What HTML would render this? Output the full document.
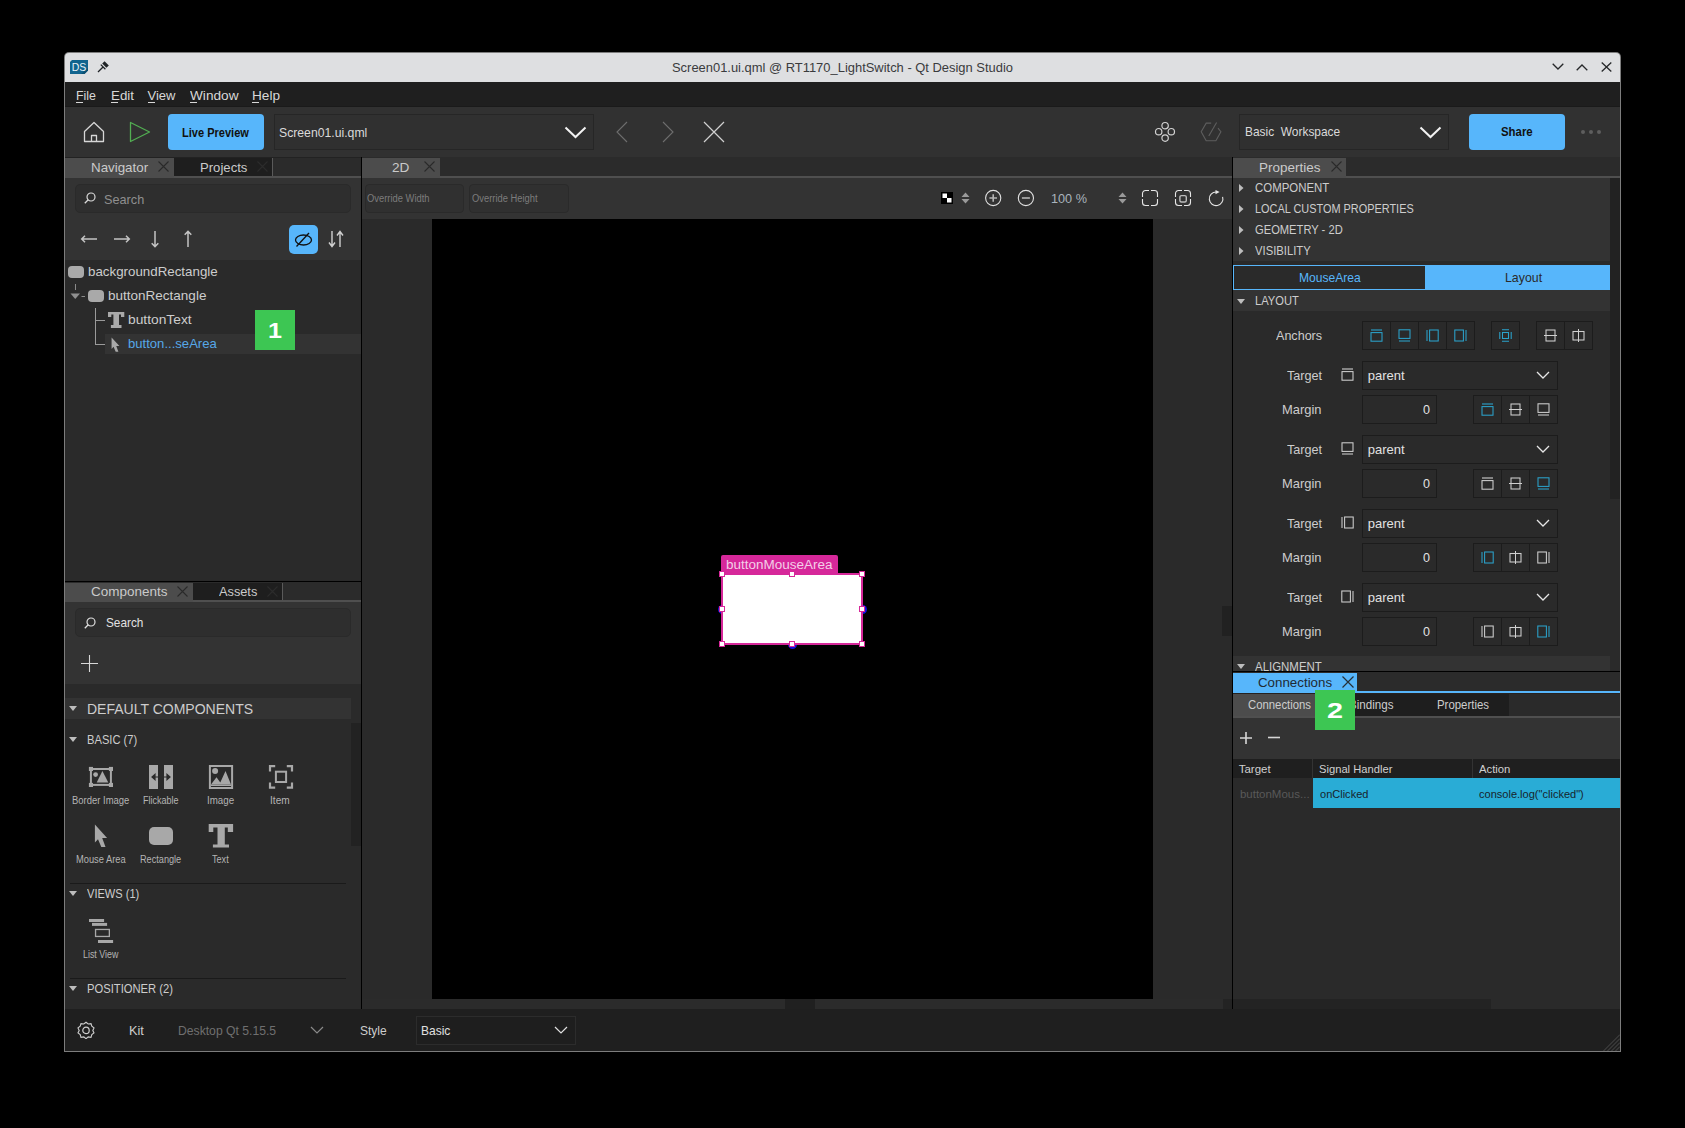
<!DOCTYPE html><html><head><meta charset="utf-8"><style>
html,body{margin:0;padding:0;background:#000;width:1685px;height:1128px;overflow:hidden;position:relative}
body>div,body>svg{position:absolute}
.t{white-space:pre;font-family:"Liberation Sans",sans-serif;transform-origin:0 50%}
</style></head><body>
<div style="left:64px;top:52px;width:1557px;height:1000px;background:#7d7d7d;border-radius:5px 5px 0 0;"></div>
<div style="left:65px;top:53px;width:1555px;height:29px;background:#dedfe1;border-radius:4px 4px 0 0;"></div>
<div style="left:65px;top:82px;width:1555px;height:25px;background:#1f1f1f;"></div>
<div style="left:65px;top:107px;width:1555px;height:50px;background:#313131;"></div>
<div style="left:65px;top:106px;width:1555px;height:1px;background:#1a1a1a;"></div>
<svg style="left:70px;top:60px;" width="19" height="14" viewBox="0 0 19 14"><path d="M2 0H18V10.5L14.5 14H0V2Z" fill="#11648e"/><path d="M18 0V10.5L14.5 14H11L18 8Z" fill="#0c5072"/><text x="9" y="11" font-family="Liberation Sans" font-size="10.5" fill="#e8f2f7" text-anchor="middle">DS</text></svg>
<svg style="left:97px;top:60px;" width="13" height="13" viewBox="0 0 13 13"><path d="M7.6 1.2L11.8 5.4L9.4 7.8L5.2 3.6Z" fill="#1f2326"/><path d="M3.8 4.6L8.4 9.2M5.8 7.2L1 12" stroke="#1f2326" stroke-width="1.3"/></svg>
<div class="t" style="left:671.5px;top:59.05px;font-size:13px;line-height:17px;color:#3a3b3d;font-weight:400;transform:scaleX(0.9943);">Screen01.ui.qml @ RT1170_LightSwitch - Qt Design Studio</div>
<svg style="left:1552px;top:63px;" width="12" height="8" viewBox="0 0 12 8"><path d="M0.7 0.7L6 6L11.3 0.7" stroke="#26282a" stroke-width="1.3" fill="none"/></svg>
<svg style="left:1576px;top:63px;" width="12" height="8" viewBox="0 0 12 8"><path d="M0.7 7.3L6 2L11.3 7.3" stroke="#26282a" stroke-width="1.3" fill="none"/></svg>
<svg style="left:1601px;top:62px;" width="11" height="10" viewBox="0 0 11 10"><path d="M0.7 0.5L10.3 9.5M10.3 0.5L0.7 9.5" stroke="#26282a" stroke-width="1.3" fill="none"/></svg>
<div class="t" style="left:75.5px;top:86.85px;font-size:13px;line-height:17px;color:#d8d8d8;font-weight:400;transform:scaleX(0.9545);">File</div>
<div style="left:76px;top:102px;width:7px;height:1px;background:#d8d8d8;"></div>
<div class="t" style="left:110.5px;top:86.85px;font-size:13px;line-height:17px;color:#d8d8d8;font-weight:400;transform:scaleX(1.0265);">Edit</div>
<div style="left:111px;top:102px;width:7px;height:1px;background:#d8d8d8;"></div>
<div class="t" style="left:147.5px;top:86.85px;font-size:13px;line-height:17px;color:#d8d8d8;font-weight:400;">View</div>
<div style="left:148px;top:102px;width:7px;height:1px;background:#d8d8d8;"></div>
<div class="t" style="left:189.5px;top:86.85px;font-size:13px;line-height:17px;color:#d8d8d8;font-weight:400;transform:scaleX(1.0486);">Window</div>
<div style="left:190px;top:102px;width:7px;height:1px;background:#d8d8d8;"></div>
<div class="t" style="left:251.5px;top:86.85px;font-size:13px;line-height:17px;color:#d8d8d8;font-weight:400;transform:scaleX(1.0467);">Help</div>
<div style="left:252px;top:102px;width:7px;height:1px;background:#d8d8d8;"></div>
<svg style="left:83px;top:121px;" width="22" height="22" viewBox="0 0 22 22"><path d="M1.5 10.5L11 1.5L20.5 10.5V20.5H1.5Z M8.5 20.5V14.5H13.5V20.5" stroke="#d6d6d6" stroke-width="1.3" fill="none" stroke-linejoin="round"/></svg>
<svg style="left:129px;top:121px;" width="22" height="22" viewBox="0 0 22 22"><path d="M1.5 1.5L20.5 11L1.5 20.5Z" stroke="#52ad52" stroke-width="1.3" fill="none" stroke-linejoin="round"/></svg>
<div style="left:168px;top:114px;width:96px;height:36px;background:#57b6fb;border-radius:4px;"></div>
<div class="t" style="left:182.3px;top:124.54px;font-size:12.5px;line-height:16px;color:#111;font-weight:700;transform:scaleX(0.8832);">Live Preview</div>
<div style="left:274px;top:114px;width:320px;height:36px;background:#303030;border:1px solid #262626;box-sizing:border-box;"></div>
<div class="t" style="left:279.2px;top:123.65px;font-size:13px;line-height:17px;color:#dadada;font-weight:400;transform:scaleX(0.9398);">Screen01.ui.qml</div>
<svg style="left:564px;top:126px;" width="23" height="13" viewBox="0 0 23 13"><path d="M1.5 1.5L11.5 11L21.5 1.5" stroke="#f2f2f2" stroke-width="2" fill="none"/></svg>
<svg style="left:616px;top:121px;" width="12" height="22" viewBox="0 0 12 22"><path d="M11 1L1 11L11 21" stroke="#6e6e6e" stroke-width="1.1" fill="none"/></svg>
<svg style="left:662px;top:121px;" width="12" height="22" viewBox="0 0 12 22"><path d="M1 1L11 11L1 21" stroke="#6e6e6e" stroke-width="1.1" fill="none"/></svg>
<svg style="left:703px;top:121px;" width="22" height="22" viewBox="0 0 22 22"><path d="M1 1L21 21M21 1L1 21" stroke="#d0d0d0" stroke-width="1.2" fill="none"/></svg>
<svg style="left:1154px;top:121px;" width="22" height="22" viewBox="0 0 22 22"><g stroke="#d2d2d2" stroke-width="1.2" fill="none"><circle cx="11.1" cy="4.7" r="3.2"/><circle cx="4.7" cy="10.7" r="3.2"/><circle cx="17.3" cy="10.7" r="3.2"/><circle cx="11.1" cy="17.1" r="3.2"/></g></svg>
<svg style="left:1200px;top:121px;" width="22" height="22" viewBox="0 0 22 22"><g stroke="#5e5e5e" stroke-width="1.1" fill="none"><path d="M11.2 2.1H6.2L1.2 10.7L6.2 19.7H15.9L20.9 10.7L18 7.1"/><path d="M16.6 1.4L8.8 15"/></g></svg>
<div style="left:1239px;top:114px;width:210px;height:36px;background:#303030;border:1px solid #262626;box-sizing:border-box;"></div>
<div class="t" style="left:1245.0px;top:123.35px;font-size:13px;line-height:17px;color:#dadada;font-weight:400;transform:scaleX(0.9172);">Basic  Workspace</div>
<svg style="left:1419px;top:126px;" width="23" height="13" viewBox="0 0 23 13"><path d="M1.5 1.5L11.5 11L21.5 1.5" stroke="#f2f2f2" stroke-width="2" fill="none"/></svg>
<div style="left:1469px;top:114px;width:96px;height:36px;background:#57b6fb;border-radius:4px;"></div>
<div class="t" style="left:1501.1px;top:124.14px;font-size:12.5px;line-height:16px;color:#111;font-weight:700;transform:scaleX(0.9122);">Share</div>
<div style="left:1581px;top:130px;width:4px;height:4px;background:#5e5e5e;border-radius:50%;"></div>
<div style="left:1589px;top:130px;width:4px;height:4px;background:#5e5e5e;border-radius:50%;"></div>
<div style="left:1597px;top:130px;width:4px;height:4px;background:#5e5e5e;border-radius:50%;"></div>
<div style="left:65px;top:157px;width:296px;height:19px;background:#2b2b2b;"></div>
<div style="left:65px;top:176px;width:296px;height:2px;background:#4f4f4f;"></div>
<div style="left:65px;top:157px;width:1555px;height:1px;background:#222222;"></div>
<div style="left:65px;top:158px;width:109px;height:20px;background:#4c4c4c;"></div>
<div class="t" style="left:90.9px;top:158.95px;font-size:13px;line-height:17px;color:#cacaca;font-weight:400;transform:scaleX(1.0262);">Navigator</div>
<svg style="left:158px;top:161px;" width="11" height="11" viewBox="0 0 11 11"><path d="M0.5 0.5L10.5 10.5M10.5 0.5L0.5 10.5" stroke="#2a2a2a" stroke-width="1.1"/></svg>
<div style="left:174px;top:158px;width:98px;height:18px;background:#1e1e1e;"></div>
<div class="t" style="left:199.9px;top:158.65px;font-size:13px;line-height:17px;color:#cacaca;font-weight:400;transform:scaleX(1.0092);">Projects</div>
<svg style="left:257px;top:161px;" width="11" height="11" viewBox="0 0 11 11"><path d="M0.5 0.5L10.5 10.5M10.5 0.5L0.5 10.5" stroke="#2c2c2c" stroke-width="1.1"/></svg>
<div style="left:272px;top:158px;width:1px;height:18px;background:#5a5a5a;"></div>
<div style="left:65px;top:178px;width:296px;height:82px;background:#333333;"></div>
<div style="left:75px;top:184px;width:276px;height:29px;background:#2e2e2e;border:1px solid #2a2a2a;border-radius:5px;box-sizing:border-box;"></div>
<svg style="left:84px;top:192px;" width="12" height="12" viewBox="0 0 12 12"><circle cx="7" cy="5" r="4" stroke="#d8d8d8" stroke-width="1.2" fill="none"/><path d="M4.2 7.8L0.8 11.2" stroke="#d8d8d8" stroke-width="1.3"/></svg>
<div class="t" style="left:103.5px;top:190.65px;font-size:13px;line-height:17px;color:#8f8f8f;font-weight:400;transform:scaleX(0.9757);">Search</div>
<svg style="left:80px;top:233px;" width="18" height="12" viewBox="0 0 18 12"><path d="M17 6H2.5M5 2.7L1.7 6L5 9.3" stroke="#c4c4c4" stroke-width="1.5" fill="none"/></svg>
<svg style="left:113px;top:233px;" width="18" height="12" viewBox="0 0 18 12"><path d="M1 6H15.5M13 2.7L16.3 6L13 9.3" stroke="#c4c4c4" stroke-width="1.5" fill="none"/></svg>
<svg style="left:149px;top:230px;" width="12" height="18" viewBox="0 0 12 18"><path d="M6 1V16M2.7 13.3L6 16.6L9.3 13.3" stroke="#c4c4c4" stroke-width="1.5" fill="none"/></svg>
<svg style="left:182px;top:230px;" width="12" height="18" viewBox="0 0 12 18"><path d="M6 17V2M2.7 4.7L6 1.4L9.3 4.7" stroke="#c4c4c4" stroke-width="1.5" fill="none"/></svg>
<div style="left:289px;top:225px;width:29px;height:29px;background:#57b6fb;border-radius:5px;"></div>
<svg style="left:294px;top:231px;" width="20" height="18" viewBox="0 0 20 18"><ellipse cx="9.5" cy="9" rx="8" ry="5" stroke="#111" stroke-width="1.3" fill="none"/><path d="M15 2L2.5 15.5" stroke="#111" stroke-width="1.3"/></svg>
<svg style="left:328px;top:230px;" width="16" height="18" viewBox="0 0 16 18"><path d="M4 1V16M1 12.5L4 16.5L7 12.5M12 17V2M9 5.5L12 1.5L15 5.5" stroke="#d0d0d0" stroke-width="1.4" fill="none"/></svg>
<div style="left:65px;top:260px;width:296px;height:321px;background:#2a2a2a;"></div>
<div style="left:105px;top:334px;width:256px;height:20px;background:#333333;"></div>
<div style="left:68px;top:266px;width:16px;height:12px;background:#a9a9a9;border-radius:4px;"></div>
<div class="t" style="left:87.7px;top:262.65px;font-size:13px;line-height:17px;color:#cdcdcd;font-weight:400;transform:scaleX(1.0254);">backgroundRectangle</div>
<div style="left:75px;top:284px;width:1px;height:6px;background:#8a8a8a;"></div>
<svg style="left:70px;top:293px;" width="16" height="7" viewBox="0 0 16 7"><path d="M0.5 0.5H10L5.25 6Z" fill="#8f8f8f"/><path d="M11.5 3.5H15" stroke="#8a8a8a" stroke-width="1"/></svg>
<div style="left:88px;top:290px;width:16px;height:12px;background:#a9a9a9;border-radius:4px;"></div>
<div class="t" style="left:107.9px;top:286.65px;font-size:13px;line-height:17px;color:#cdcdcd;font-weight:400;transform:scaleX(1.0392);">buttonRectangle</div>
<div style="left:95px;top:308px;width:1px;height:37px;background:#9a9a9a;"></div>
<div style="left:95px;top:320px;width:10px;height:1px;background:#9a9a9a;"></div>
<div style="left:95px;top:344px;width:10px;height:1px;background:#9a9a9a;"></div>
<svg style="left:108px;top:312px;" width="17" height="17" viewBox="0 0 17 17"><path d="M0 0H16.3V5H13V2.5H11V13H13.5V16H2.9V13H5.4V2.5H3.3V5H0Z" fill="#a9a9a9"/></svg>
<div class="t" style="left:128.1px;top:310.65px;font-size:13px;line-height:17px;color:#cdcdcd;font-weight:400;transform:scaleX(1.0617);">buttonText</div>
<svg style="left:111px;top:337px;" width="9" height="15" viewBox="0 0 14 23.3"><path d="M0.9 0.6V18.5L4 15.3L7.3 23H11.5L8.2 14H13.1Z" fill="#a9a9a9"/></svg>
<div class="t" style="left:128.1px;top:334.65px;font-size:13px;line-height:17px;color:#56a8e8;font-weight:400;transform:scaleX(1.0071);">button...seArea</div>
<div style="left:255px;top:310px;width:40px;height:40px;background:#3dc653;"></div>
<div class="t" style="left:268.0px;top:316.25px;font-size:22px;line-height:29px;color:#ffffff;font-weight:700;transform:scaleX(1.1429);">1</div>
<div style="left:361px;top:157px;width:1px;height:852px;background:#000000;"></div>
<div style="left:65px;top:581px;width:296px;height:1px;background:#000000;"></div>
<div style="left:65px;top:582px;width:296px;height:18px;background:#2b2b2b;"></div>
<div style="left:65px;top:600px;width:296px;height:2px;background:#4f4f4f;"></div>
<div style="left:65px;top:583px;width:128px;height:19px;background:#4c4c4c;"></div>
<div class="t" style="left:90.8px;top:583.25px;font-size:13px;line-height:17px;color:#cacaca;font-weight:400;transform:scaleX(1.0364);">Components</div>
<svg style="left:177px;top:586px;" width="11" height="11" viewBox="0 0 11 11"><path d="M0.5 0.5L10.5 10.5M10.5 0.5L0.5 10.5" stroke="#2a2a2a" stroke-width="1.1"/></svg>
<div style="left:193px;top:583px;width:89px;height:17px;background:#1e1e1e;"></div>
<div class="t" style="left:218.7px;top:583.25px;font-size:13px;line-height:17px;color:#cacaca;font-weight:400;transform:scaleX(0.9817);">Assets</div>
<svg style="left:267px;top:586px;" width="11" height="11" viewBox="0 0 11 11"><path d="M0.5 0.5L10.5 10.5M10.5 0.5L0.5 10.5" stroke="#2c2c2c" stroke-width="1.1"/></svg>
<div style="left:282px;top:583px;width:1px;height:17px;background:#5a5a5a;"></div>
<div style="left:65px;top:602px;width:296px;height:82px;background:#333333;"></div>
<div style="left:75px;top:608px;width:276px;height:29px;background:#2e2e2e;border:1px solid #2a2a2a;border-radius:5px;box-sizing:border-box;"></div>
<svg style="left:84px;top:617px;" width="12" height="12" viewBox="0 0 12 12"><circle cx="7" cy="5" r="4" stroke="#e0e0e0" stroke-width="1.2" fill="none"/><path d="M4.2 7.8L0.8 11.2" stroke="#e0e0e0" stroke-width="1.3"/></svg>
<div class="t" style="left:106.4px;top:614.25px;font-size:13px;line-height:17px;color:#e2e2e2;font-weight:400;transform:scaleX(0.9077);">Search</div>
<svg style="left:81px;top:655px;" width="17" height="17" viewBox="0 0 17 17"><path d="M8.5 0V17M0 8.5H17" stroke="#d8d8d8" stroke-width="1.1"/></svg>
<div style="left:65px;top:684px;width:296px;height:325px;background:#2a2a2a;"></div>
<div style="left:65px;top:698px;width:286px;height:21px;background:#333333;"></div>
<svg style="left:69px;top:706px;" width="9" height="6" viewBox="0 0 9 6"><path d="M0 0H8L4 5Z" fill="#bdbdbd"/></svg>
<div class="t" style="left:86.7px;top:699.07px;font-size:15px;line-height:20px;color:#cdcdcd;font-weight:400;transform:scaleX(0.9341);">DEFAULT COMPONENTS</div>
<div style="left:351px;top:723px;width:10px;height:123px;background:#222222;"></div>
<svg style="left:69px;top:737px;" width="9" height="6" viewBox="0 0 9 6"><path d="M0 0H8L4 5Z" fill="#bdbdbd"/></svg>
<div class="t" style="left:86.7px;top:731.15px;font-size:13px;line-height:17px;color:#cdcdcd;font-weight:400;transform:scaleX(0.8579);">BASIC (7)</div>
<svg style="left:88px;top:766px;" width="26" height="22" viewBox="0 0 26 22"><g fill="#a8a8a8"><rect x="0.9" y="0.9" width="4.1" height="4.1"/><rect x="20.9" y="0.9" width="4.1" height="4.1"/><rect x="0.9" y="16.9" width="4.1" height="4.1"/><rect x="20.9" y="16.9" width="4.1" height="4.1"/></g><rect x="2.9" y="3" width="20" height="15.9" stroke="#a8a8a8" stroke-width="2" fill="none"/><circle cx="7.6" cy="8.6" r="2.4" fill="#a8a8a8"/><path d="M8.7 16.6L14.4 5L20.3 16.6Z" fill="#a8a8a8"/></svg>
<svg style="left:148px;top:765px;" width="26" height="25" viewBox="0 0 26 25"><path d="M1 0H10V24H1Z M16 0H25V24H16Z" fill="#a8a8a8"/><path d="M3.1 12L7.6 8V16Z M7.6 11.4H10V12.6H7.6Z M22.9 12L18.4 8V16Z M16 11.4H18.4V12.6H16Z" fill="#2a2a2a"/></svg>
<svg style="left:208px;top:765px;" width="26" height="25" viewBox="0 0 26 25"><rect x="1.9" y="1" width="22.2" height="22" stroke="#a8a8a8" stroke-width="2" fill="none"/><circle cx="7.1" cy="6" r="3" fill="#a8a8a8"/><path d="M3 19.5L8.5 12.3L12.3 17.5L17.5 6L23 19.5Z" fill="#a8a8a8"/><rect x="3" y="19.5" width="20" height="1.5" fill="#a8a8a8"/></svg>
<svg style="left:268px;top:765px;" width="26" height="25" viewBox="0 0 26 25"><path d="M2 6.6V1.2H7.2M18.8 1.2H24V6.6M24 17.6V22.7H18.8M7.2 22.7H2V17.6" stroke="#a8a8a8" stroke-width="2.2" fill="none"/><rect x="7.9" y="6.7" width="10.2" height="10.3" stroke="#a8a8a8" stroke-width="2" fill="none"/></svg>
<div class="t" style="left:71.9px;top:793.91px;font-size:10px;line-height:13px;color:#b4b4b4;font-weight:400;transform:scaleX(0.9456);">Border Image</div>
<div class="t" style="left:142.5px;top:793.91px;font-size:10px;line-height:13px;color:#b4b4b4;font-weight:400;transform:scaleX(0.9020);">Flickable</div>
<div class="t" style="left:206.5px;top:793.91px;font-size:10px;line-height:13px;color:#b4b4b4;font-weight:400;transform:scaleX(0.9749);">Image</div>
<div class="t" style="left:270.3px;top:793.91px;font-size:10px;line-height:13px;color:#b4b4b4;font-weight:400;transform:scaleX(1.0127);">Item</div>
<svg style="left:94px;top:824px;" width="14" height="24" viewBox="0 0 14 24"><path d="M0.9 0.6V18.5L4 15.3L7.3 23H11.5L8.2 14H13.1Z" fill="#a8a8a8"/></svg>
<div style="left:149px;top:827px;width:24px;height:18px;background:#a8a8a8;border-radius:5px;"></div>
<svg style="left:208px;top:824px;" width="26" height="25" viewBox="0 0 26 25"><path d="M0.7 0H25.1V8H19.8V3.5H16.8V20.4H21V23.6H4.9V20.4H9.5V3.5H5.3V8H0.7Z" fill="#a8a8a8"/></svg>
<div class="t" style="left:75.5px;top:853.22px;font-size:10px;line-height:13px;color:#b4b4b4;font-weight:400;transform:scaleX(0.9293);">Mouse Area</div>
<div class="t" style="left:139.7px;top:853.22px;font-size:10px;line-height:13px;color:#b4b4b4;font-weight:400;transform:scaleX(0.9149);">Rectangle</div>
<div class="t" style="left:212.0px;top:853.22px;font-size:10px;line-height:13px;color:#b4b4b4;font-weight:400;transform:scaleX(0.9104);">Text</div>
<div style="left:70px;top:883px;width:276px;height:1px;background:#1a1a1a;"></div>
<svg style="left:69px;top:891px;" width="9" height="6" viewBox="0 0 9 6"><path d="M0 0H8L4 5Z" fill="#bdbdbd"/></svg>
<div class="t" style="left:86.5px;top:885.05px;font-size:13px;line-height:17px;color:#cdcdcd;font-weight:400;transform:scaleX(0.8517);">VIEWS (1)</div>
<svg style="left:88px;top:918px;" width="26" height="26" viewBox="0 0 26 26"><g fill="#a8a8a8"><rect x="1" y="1" width="15.1" height="3"/><rect x="4" y="4.9" width="15.1" height="3"/><rect x="10" y="22" width="15.1" height="3"/></g><rect x="7.55" y="11.45" width="13.8" height="7" stroke="#a8a8a8" stroke-width="1.3" fill="none"/></svg>
<div class="t" style="left:82.9px;top:948.12px;font-size:10px;line-height:13px;color:#b4b4b4;font-weight:400;transform:scaleX(0.8860);">List View</div>
<div style="left:70px;top:978px;width:276px;height:1px;background:#1a1a1a;"></div>
<svg style="left:69px;top:986px;" width="9" height="6" viewBox="0 0 9 6"><path d="M0 0H8L4 5Z" fill="#bdbdbd"/></svg>
<div class="t" style="left:86.5px;top:980.15px;font-size:13px;line-height:17px;color:#cdcdcd;font-weight:400;transform:scaleX(0.8627);">POSITIONER (2)</div>
<div style="left:65px;top:1009px;width:1555px;height:42px;background:#1f1f1f;"></div>
<svg style="left:77px;top:1021px;" width="18" height="18" viewBox="0 0 18 18"><path d="M9 1.2L11.2 3L14 2.6L14.8 5.2L17 6.9L15.8 9.4L17 11.9L14.8 13.6L14 16.3L11.2 15.9L9 17.7L6.8 15.9L4 16.3L3.2 13.6L1 11.9L2.2 9.4L1 6.9L3.2 5.2L4 2.6L6.8 3Z" stroke="#cfcfcf" stroke-width="1.1" fill="none"/><circle cx="9" cy="9.4" r="3.2" stroke="#cfcfcf" stroke-width="1.2" fill="none"/></svg>
<div class="t" style="left:128.6px;top:1022.05px;font-size:13px;line-height:17px;color:#cdcdcd;font-weight:400;transform:scaleX(0.9821);">Kit</div>
<div class="t" style="left:177.8px;top:1022.05px;font-size:13px;line-height:17px;color:#6f6f6f;font-weight:400;transform:scaleX(0.9362);">Desktop Qt 5.15.5</div>
<svg style="left:310px;top:1026px;" width="14" height="9" viewBox="0 0 14 9"><path d="M1 1L7 7L13 1" stroke="#8a8a8a" stroke-width="1.2" fill="none"/></svg>
<div class="t" style="left:360.3px;top:1022.05px;font-size:13px;line-height:17px;color:#cdcdcd;font-weight:400;transform:scaleX(0.9237);">Style</div>
<div style="left:416px;top:1016px;width:160px;height:29px;background:#1e1e1e;border:1px solid #2c2c2c;box-sizing:border-box;"></div>
<div class="t" style="left:420.9px;top:1022.05px;font-size:13px;line-height:17px;color:#e0e0e0;font-weight:400;transform:scaleX(0.9215);">Basic</div>
<svg style="left:554px;top:1026px;" width="14" height="9" viewBox="0 0 14 9"><path d="M1 1L7 7L13 1" stroke="#e0e0e0" stroke-width="1.2" fill="none"/></svg>
<div style="left:362px;top:157px;width:870px;height:19px;background:#2b2b2b;"></div>
<div style="left:362px;top:176px;width:870px;height:2px;background:#4f4f4f;"></div>
<div style="left:362px;top:158px;width:78px;height:20px;background:#4c4c4c;"></div>
<div class="t" style="left:392.1px;top:158.65px;font-size:13px;line-height:17px;color:#cacaca;font-weight:400;transform:scaleX(1.0466);">2D</div>
<svg style="left:424px;top:161px;" width="11" height="11" viewBox="0 0 11 11"><path d="M0.5 0.5L10.5 10.5M10.5 0.5L0.5 10.5" stroke="#2a2a2a" stroke-width="1.1"/></svg>
<div style="left:362px;top:178px;width:870px;height:41px;background:#333333;"></div>
<div style="left:365px;top:184px;width:99px;height:29px;background:#303030;border:1px solid #2a2a2a;border-radius:4px;box-sizing:border-box;"></div>
<div style="left:469px;top:184px;width:100px;height:29px;background:#303030;border:1px solid #2a2a2a;border-radius:4px;box-sizing:border-box;"></div>
<div class="t" style="left:366.7px;top:192.42px;font-size:10px;line-height:13px;color:#7c7c7c;font-weight:400;transform:scaleX(0.9372);">Override Width</div>
<div class="t" style="left:471.7px;top:192.42px;font-size:10px;line-height:13px;color:#7c7c7c;font-weight:400;transform:scaleX(0.9353);">Override Height</div>
<svg style="left:941px;top:192px;" width="12" height="12" viewBox="0 0 12 12"><rect x="0" y="0" width="12" height="12" fill="#000"/><rect x="1.5" y="1.5" width="4.5" height="4.5" fill="#fff"/><rect x="6" y="6" width="4.5" height="4.5" fill="#fff"/></svg>
<svg style="left:961px;top:192px;" width="9" height="12" viewBox="0 0 9 12"><path d="M0.5 5L4.5 0.5L8.5 5Z M0.5 7L4.5 11.5L8.5 7Z" fill="#9a9a9a"/></svg>
<svg style="left:984px;top:189px;" width="18" height="18" viewBox="0 0 18 18"><circle cx="9.2" cy="9" r="7.6" stroke="#e0e0e0" stroke-width="1.1" fill="none"/><path d="M9.2 5.2V12.8M5.4 9H13" stroke="#b4b4b4" stroke-width="1.6"/></svg>
<svg style="left:1017px;top:189px;" width="18" height="18" viewBox="0 0 18 18"><circle cx="8.9" cy="9" r="7.6" stroke="#e0e0e0" stroke-width="1.1" fill="none"/><path d="M4.9 9H12.9" stroke="#b4b4b4" stroke-width="1.6"/></svg>
<div class="t" style="left:1050.5px;top:190.15px;font-size:13px;line-height:17px;color:#a9b4bd;font-weight:400;transform:scaleX(0.9763);">100 %</div>
<svg style="left:1118px;top:192px;" width="9" height="12" viewBox="0 0 9 12"><path d="M0.5 5L4.5 0.5L8.5 5Z M0.5 7L4.5 11.5L8.5 7Z" fill="#9a9a9a"/></svg>
<svg style="left:1141px;top:189px;" width="18" height="18" viewBox="0 0 18 18"><path d="M1.5 8V4.5A3 3 0 0 1 4.5 1.5H8M10 1.5H13.5A3 3 0 0 1 16.5 4.5V8M16.5 10V13.5A3 3 0 0 1 13.5 16.5H10M8 16.5H4.5A3 3 0 0 1 1.5 13.5V10" stroke="#e6e6e6" stroke-width="1.1" fill="none"/></svg>
<svg style="left:1174px;top:189px;" width="18" height="18" viewBox="0 0 18 18"><path d="M1.5 8V4.5A3 3 0 0 1 4.5 1.5H8M10 1.5H13.5A3 3 0 0 1 16.5 4.5V8M16.5 10V13.5A3 3 0 0 1 13.5 16.5H10M8 16.5H4.5A3 3 0 0 1 1.5 13.5V10" stroke="#e6e6e6" stroke-width="1.1" fill="none"/><rect x="5.9" y="6.6" width="6.4" height="6.4" rx="1.5" stroke="#bdbdbd" stroke-width="1.4" fill="none"/></svg>
<svg style="left:1206px;top:188px;" width="19" height="19" viewBox="0 0 19 19"><path d="M16.6 8.8A6.8 6.8 0 1 1 10.2 4" stroke="#e6e6e6" stroke-width="1.1" fill="none"/><path d="M9.5 2L13.6 4L9.5 6.2Z" fill="#e6e6e6"/></svg>
<div style="left:362px;top:219px;width:870px;height:790px;background:#2a2a2a;"></div>
<div style="left:432px;top:219px;width:721px;height:780px;background:#000000;"></div>
<div style="left:362px;top:999px;width:870px;height:10px;background:#2b2b2b;"></div>
<div style="left:785px;top:999px;width:30px;height:10px;background:#202020;"></div>
<div style="left:1222px;top:606px;width:10px;height:30px;background:#212121;"></div>
<div style="left:721px;top:555px;width:117px;height:19px;background:#d6289a;border-radius:2px 2px 0 0;"></div>
<div class="t" style="left:726.0px;top:557.24px;font-size:12px;line-height:16px;color:#f3cfe8;font-weight:400;transform:scaleX(1.1242);">buttonMouseArea</div>
<div style="left:717.5px;top:604.5px;width:9.0px;height:9.0px;background:#1010e0;border-radius:50%;"></div>
<div style="left:857.5px;top:604.5px;width:9.0px;height:9.0px;background:#1010e0;border-radius:50%;"></div>
<div style="left:787.5px;top:639.5px;width:9.0px;height:9.0px;background:#1010e0;border-radius:50%;"></div>
<div style="left:721px;top:573px;width:142px;height:72px;background:#ffffff;border:2px solid #d6289a;box-sizing:border-box;"></div>
<div style="left:719px;top:571px;width:6px;height:6px;background:#fff;border:1px solid #d6289a;box-sizing:border-box;"></div>
<div style="left:789px;top:571px;width:6px;height:6px;background:#fff;border:1px solid #d6289a;box-sizing:border-box;"></div>
<div style="left:859px;top:571px;width:6px;height:6px;background:#fff;border:1px solid #d6289a;box-sizing:border-box;"></div>
<div style="left:719px;top:606px;width:6px;height:6px;background:#fff;border:1px solid #d6289a;box-sizing:border-box;"></div>
<div style="left:859px;top:606px;width:6px;height:6px;background:#fff;border:1px solid #d6289a;box-sizing:border-box;"></div>
<div style="left:719px;top:641px;width:6px;height:6px;background:#fff;border:1px solid #d6289a;box-sizing:border-box;"></div>
<div style="left:789px;top:641px;width:6px;height:6px;background:#fff;border:1px solid #d6289a;box-sizing:border-box;"></div>
<div style="left:859px;top:641px;width:6px;height:6px;background:#fff;border:1px solid #d6289a;box-sizing:border-box;"></div>
<div style="left:1232px;top:157px;width:1px;height:852px;background:#000000;"></div>
<div style="left:1233px;top:157px;width:387px;height:19px;background:#2b2b2b;"></div>
<div style="left:1233px;top:176px;width:387px;height:2px;background:#4f4f4f;"></div>
<div style="left:1233px;top:158px;width:113px;height:20px;background:#4c4c4c;"></div>
<div class="t" style="left:1259.0px;top:158.65px;font-size:13px;line-height:17px;color:#cacaca;font-weight:400;transform:scaleX(1.0363);">Properties</div>
<svg style="left:1331px;top:161px;" width="11" height="11" viewBox="0 0 11 11"><path d="M0.5 0.5L10.5 10.5M10.5 0.5L0.5 10.5" stroke="#2a2a2a" stroke-width="1.1"/></svg>
<div style="left:1233px;top:178px;width:377px;height:83px;background:#333333;"></div>
<svg style="left:1239px;top:183.7px;" width="5" height="9" viewBox="0 0 5 9"><path d="M0 0V8L4.5 4Z" fill="#bdbdbd"/></svg>
<svg style="left:1239px;top:204.7px;" width="5" height="9" viewBox="0 0 5 9"><path d="M0 0V8L4.5 4Z" fill="#bdbdbd"/></svg>
<svg style="left:1239px;top:225.7px;" width="5" height="9" viewBox="0 0 5 9"><path d="M0 0V8L4.5 4Z" fill="#bdbdbd"/></svg>
<svg style="left:1239px;top:246.7px;" width="5" height="9" viewBox="0 0 5 9"><path d="M0 0V8L4.5 4Z" fill="#bdbdbd"/></svg>
<div class="t" style="left:1254.8px;top:179.35px;font-size:13px;line-height:17px;color:#cdcdcd;font-weight:400;transform:scaleX(0.8793);">COMPONENT</div>
<div class="t" style="left:1254.8px;top:200.35px;font-size:13px;line-height:17px;color:#cdcdcd;font-weight:400;transform:scaleX(0.8395);">LOCAL CUSTOM PROPERTIES</div>
<div class="t" style="left:1254.8px;top:221.35px;font-size:13px;line-height:17px;color:#cdcdcd;font-weight:400;transform:scaleX(0.8589);">GEOMETRY - 2D</div>
<div class="t" style="left:1254.8px;top:242.35px;font-size:13px;line-height:17px;color:#cdcdcd;font-weight:400;transform:scaleX(0.8661);">VISIBILITY</div>
<div style="left:1233px;top:261px;width:377px;height:4px;background:#2a2a2a;"></div>
<div style="left:1233px;top:265px;width:193px;height:25px;background:#2a2a2a;border:1px solid #57b6fb;box-sizing:border-box;"></div>
<div style="left:1425px;top:265px;width:185px;height:25px;background:#57b6fb;"></div>
<div class="t" style="left:1298.9px;top:269.05px;font-size:13px;line-height:17px;color:#57b6fb;font-weight:400;transform:scaleX(0.9295);">MouseArea</div>
<div class="t" style="left:1504.6px;top:269.15px;font-size:13px;line-height:17px;color:#2a2a2a;font-weight:400;transform:scaleX(0.9501);">Layout</div>
<div style="left:1233px;top:290px;width:377px;height:21px;background:#333333;"></div>
<svg style="left:1237px;top:299px;" width="9" height="6" viewBox="0 0 9 6"><path d="M0 0H8L4 5Z" fill="#bdbdbd"/></svg>
<div class="t" style="left:1254.8px;top:291.95px;font-size:13px;line-height:17px;color:#cdcdcd;font-weight:400;transform:scaleX(0.8578);">LAYOUT</div>
<div style="left:1233px;top:311px;width:377px;height:345px;background:#2a2a2a;"></div>
<div style="left:1610px;top:178px;width:10px;height:831px;background:#2a2a2a;"></div>
<div style="left:1610px;top:178px;width:10px;height:321px;background:#222222;"></div>
<div style="left:1233px;top:656px;width:377px;height:15px;background:#333333;"></div>
<svg style="left:1237px;top:664px;" width="9" height="6" viewBox="0 0 9 6"><path d="M0 0H8L4 5Z" fill="#bdbdbd"/></svg>
<div class="t" style="left:1254.8px;top:658.15px;font-size:13px;line-height:17px;color:#cdcdcd;font-weight:400;transform:scaleX(0.8808);">ALIGNMENT</div>
<div class="t" style="left:1275.5px;top:327.15px;font-size:13px;line-height:17px;color:#cdcdcd;font-weight:400;transform:scaleX(0.9664);">Anchors</div>
<div style="left:1362px;top:321px;width:113px;height:29px;background:#2a2a2a;border:1px solid #1c1c1c;box-sizing:border-box;"></div>
<svg style="left:1370px;top:329px;" width="13" height="13" viewBox="0 0 13 13"><path d="M1 1H12" stroke="#2ba3cc" stroke-width="1.1"/><rect x="1" y="3.6" width="11" height="8.6" stroke="#2ba3cc" stroke-width="1.05" fill="none"/></svg>
<div style="left:1390px;top:321px;width:1px;height:29px;background:#1c1c1c;"></div>
<svg style="left:1398px;top:329px;" width="13" height="13" viewBox="0 0 13 13"><rect x="1" y="0.8" width="11" height="8.6" stroke="#2ba3cc" stroke-width="1.05" fill="none"/><path d="M1 12H12" stroke="#2ba3cc" stroke-width="1.05"/></svg>
<div style="left:1418px;top:321px;width:1px;height:29px;background:#1c1c1c;"></div>
<svg style="left:1426px;top:329px;" width="13" height="13" viewBox="0 0 13 13"><path d="M1 1V12" stroke="#2ba3cc" stroke-width="1.05"/><rect x="3.6" y="1" width="8.6" height="11" stroke="#2ba3cc" stroke-width="1.05" fill="none"/></svg>
<div style="left:1446px;top:321px;width:1px;height:29px;background:#1c1c1c;"></div>
<svg style="left:1454px;top:329px;" width="13" height="13" viewBox="0 0 13 13"><rect x="0.8" y="1" width="8.6" height="11" stroke="#2ba3cc" stroke-width="1.05" fill="none"/><path d="M12 1V12" stroke="#2ba3cc" stroke-width="1.05"/></svg>
<div style="left:1491px;top:321px;width:29px;height:29px;background:#2a2a2a;border:1px solid #1c1c1c;box-sizing:border-box;"></div>
<svg style="left:1499px;top:329px;" width="13" height="13" viewBox="0 0 13 13"><path d="M3 0.8H10M3 12.2H10M0.8 3V10M12.2 3V10" stroke="#2ba3cc" stroke-width="1.05"/><rect x="3.5" y="3.5" width="6" height="6" stroke="#2ba3cc" stroke-width="1.05" fill="none"/></svg>
<div style="left:1536px;top:321px;width:57px;height:29px;background:#2a2a2a;border:1px solid #1c1c1c;box-sizing:border-box;"></div>
<svg style="left:1544px;top:329px;" width="13" height="13" viewBox="0 0 13 13"><rect x="2" y="1" width="9" height="11" stroke="#d0d0d0" stroke-width="1.05" fill="none"/><path d="M0 6.5H13" stroke="#d0d0d0" stroke-width="1.05"/></svg>
<div style="left:1564px;top:321px;width:1px;height:29px;background:#1c1c1c;"></div>
<svg style="left:1572px;top:329px;" width="13" height="13" viewBox="0 0 13 13"><rect x="1" y="2.5" width="11" height="8.5" stroke="#d0d0d0" stroke-width="1.05" fill="none"/><path d="M6.5 0V13" stroke="#d0d0d0" stroke-width="1.05"/></svg>
<div class="t" style="left:1286.5px;top:366.65px;font-size:13px;line-height:17px;color:#cdcdcd;font-weight:400;transform:scaleX(0.9712);">Target</div>
<svg style="left:1341px;top:368px;" width="13" height="13" viewBox="0 0 13 13"><path d="M1 1H12" stroke="#d0d0d0" stroke-width="1.1"/><rect x="1" y="3.6" width="11" height="8.6" stroke="#d0d0d0" stroke-width="1.05" fill="none"/></svg>
<div style="left:1362px;top:361px;width:196px;height:29px;background:#2a2a2a;border:1px solid #1c1c1c;box-sizing:border-box;"></div>
<div class="t" style="left:1367.7px;top:366.65px;font-size:13px;line-height:17px;color:#e2e2e2;font-weight:400;">parent</div>
<svg style="left:1536px;top:371px;" width="14" height="9" viewBox="0 0 14 9"><path d="M1 1L7 7L13 1" stroke="#e6e6e6" stroke-width="1.3" fill="none"/></svg>
<div class="t" style="left:1282.1px;top:400.65px;font-size:13px;line-height:17px;color:#cdcdcd;font-weight:400;transform:scaleX(0.9937);">Margin</div>
<div style="left:1362px;top:395px;width:75px;height:29px;background:#2a2a2a;border:1px solid #1c1c1c;box-sizing:border-box;"></div>
<div class="t" style="left:1422.5px;top:400.65px;font-size:13px;line-height:17px;color:#e2e2e2;font-weight:400;transform:scaleX(0.9676);">0</div>
<div style="left:1473px;top:395px;width:85px;height:29px;background:#2a2a2a;border:1px solid #1c1c1c;box-sizing:border-box;"></div>
<svg style="left:1481px;top:403px;" width="13" height="13" viewBox="0 0 13 13"><path d="M1 1H12" stroke="#2ba3cc" stroke-width="1.1"/><rect x="1" y="3.6" width="11" height="8.6" stroke="#2ba3cc" stroke-width="1.05" fill="none"/></svg>
<div style="left:1501px;top:395px;width:1px;height:29px;background:#1c1c1c;"></div>
<svg style="left:1509px;top:403px;" width="13" height="13" viewBox="0 0 13 13"><rect x="2" y="1" width="9" height="11" stroke="#d0d0d0" stroke-width="1.05" fill="none"/><path d="M0 6.5H13" stroke="#d0d0d0" stroke-width="1.05"/></svg>
<div style="left:1529px;top:395px;width:1px;height:29px;background:#1c1c1c;"></div>
<svg style="left:1537px;top:403px;" width="13" height="13" viewBox="0 0 13 13"><rect x="1" y="0.8" width="11" height="8.6" stroke="#d0d0d0" stroke-width="1.05" fill="none"/><path d="M1 12H12" stroke="#d0d0d0" stroke-width="1.05"/></svg>
<div class="t" style="left:1286.5px;top:440.65px;font-size:13px;line-height:17px;color:#cdcdcd;font-weight:400;transform:scaleX(0.9712);">Target</div>
<svg style="left:1341px;top:442px;" width="13" height="13" viewBox="0 0 13 13"><rect x="1" y="0.8" width="11" height="8.6" stroke="#d0d0d0" stroke-width="1.05" fill="none"/><path d="M1 12H12" stroke="#d0d0d0" stroke-width="1.05"/></svg>
<div style="left:1362px;top:435px;width:196px;height:29px;background:#2a2a2a;border:1px solid #1c1c1c;box-sizing:border-box;"></div>
<div class="t" style="left:1367.7px;top:440.65px;font-size:13px;line-height:17px;color:#e2e2e2;font-weight:400;">parent</div>
<svg style="left:1536px;top:445px;" width="14" height="9" viewBox="0 0 14 9"><path d="M1 1L7 7L13 1" stroke="#e6e6e6" stroke-width="1.3" fill="none"/></svg>
<div class="t" style="left:1282.1px;top:474.65px;font-size:13px;line-height:17px;color:#cdcdcd;font-weight:400;transform:scaleX(0.9937);">Margin</div>
<div style="left:1362px;top:469px;width:75px;height:29px;background:#2a2a2a;border:1px solid #1c1c1c;box-sizing:border-box;"></div>
<div class="t" style="left:1422.5px;top:474.65px;font-size:13px;line-height:17px;color:#e2e2e2;font-weight:400;transform:scaleX(0.9676);">0</div>
<div style="left:1473px;top:469px;width:85px;height:29px;background:#2a2a2a;border:1px solid #1c1c1c;box-sizing:border-box;"></div>
<svg style="left:1481px;top:477px;" width="13" height="13" viewBox="0 0 13 13"><path d="M1 1H12" stroke="#d0d0d0" stroke-width="1.1"/><rect x="1" y="3.6" width="11" height="8.6" stroke="#d0d0d0" stroke-width="1.05" fill="none"/></svg>
<div style="left:1501px;top:469px;width:1px;height:29px;background:#1c1c1c;"></div>
<svg style="left:1509px;top:477px;" width="13" height="13" viewBox="0 0 13 13"><rect x="2" y="1" width="9" height="11" stroke="#d0d0d0" stroke-width="1.05" fill="none"/><path d="M0 6.5H13" stroke="#d0d0d0" stroke-width="1.05"/></svg>
<div style="left:1529px;top:469px;width:1px;height:29px;background:#1c1c1c;"></div>
<svg style="left:1537px;top:477px;" width="13" height="13" viewBox="0 0 13 13"><rect x="1" y="0.8" width="11" height="8.6" stroke="#2ba3cc" stroke-width="1.05" fill="none"/><path d="M1 12H12" stroke="#2ba3cc" stroke-width="1.05"/></svg>
<div class="t" style="left:1286.5px;top:514.65px;font-size:13px;line-height:17px;color:#cdcdcd;font-weight:400;transform:scaleX(0.9712);">Target</div>
<svg style="left:1341px;top:516px;" width="13" height="13" viewBox="0 0 13 13"><path d="M1 1V12" stroke="#d0d0d0" stroke-width="1.05"/><rect x="3.6" y="1" width="8.6" height="11" stroke="#d0d0d0" stroke-width="1.05" fill="none"/></svg>
<div style="left:1362px;top:509px;width:196px;height:29px;background:#2a2a2a;border:1px solid #1c1c1c;box-sizing:border-box;"></div>
<div class="t" style="left:1367.7px;top:514.65px;font-size:13px;line-height:17px;color:#e2e2e2;font-weight:400;">parent</div>
<svg style="left:1536px;top:519px;" width="14" height="9" viewBox="0 0 14 9"><path d="M1 1L7 7L13 1" stroke="#e6e6e6" stroke-width="1.3" fill="none"/></svg>
<div class="t" style="left:1282.1px;top:548.65px;font-size:13px;line-height:17px;color:#cdcdcd;font-weight:400;transform:scaleX(0.9937);">Margin</div>
<div style="left:1362px;top:543px;width:75px;height:29px;background:#2a2a2a;border:1px solid #1c1c1c;box-sizing:border-box;"></div>
<div class="t" style="left:1422.5px;top:548.65px;font-size:13px;line-height:17px;color:#e2e2e2;font-weight:400;transform:scaleX(0.9676);">0</div>
<div style="left:1473px;top:543px;width:85px;height:29px;background:#2a2a2a;border:1px solid #1c1c1c;box-sizing:border-box;"></div>
<svg style="left:1481px;top:551px;" width="13" height="13" viewBox="0 0 13 13"><path d="M1 1V12" stroke="#2ba3cc" stroke-width="1.05"/><rect x="3.6" y="1" width="8.6" height="11" stroke="#2ba3cc" stroke-width="1.05" fill="none"/></svg>
<div style="left:1501px;top:543px;width:1px;height:29px;background:#1c1c1c;"></div>
<svg style="left:1509px;top:551px;" width="13" height="13" viewBox="0 0 13 13"><rect x="1" y="2.5" width="11" height="8.5" stroke="#d0d0d0" stroke-width="1.05" fill="none"/><path d="M6.5 0V13" stroke="#d0d0d0" stroke-width="1.05"/></svg>
<div style="left:1529px;top:543px;width:1px;height:29px;background:#1c1c1c;"></div>
<svg style="left:1537px;top:551px;" width="13" height="13" viewBox="0 0 13 13"><rect x="0.8" y="1" width="8.6" height="11" stroke="#d0d0d0" stroke-width="1.05" fill="none"/><path d="M12 1V12" stroke="#d0d0d0" stroke-width="1.05"/></svg>
<div class="t" style="left:1286.5px;top:588.65px;font-size:13px;line-height:17px;color:#cdcdcd;font-weight:400;transform:scaleX(0.9712);">Target</div>
<svg style="left:1341px;top:590px;" width="13" height="13" viewBox="0 0 13 13"><rect x="0.8" y="1" width="8.6" height="11" stroke="#d0d0d0" stroke-width="1.05" fill="none"/><path d="M12 1V12" stroke="#d0d0d0" stroke-width="1.05"/></svg>
<div style="left:1362px;top:583px;width:196px;height:29px;background:#2a2a2a;border:1px solid #1c1c1c;box-sizing:border-box;"></div>
<div class="t" style="left:1367.7px;top:588.65px;font-size:13px;line-height:17px;color:#e2e2e2;font-weight:400;">parent</div>
<svg style="left:1536px;top:593px;" width="14" height="9" viewBox="0 0 14 9"><path d="M1 1L7 7L13 1" stroke="#e6e6e6" stroke-width="1.3" fill="none"/></svg>
<div class="t" style="left:1282.1px;top:622.65px;font-size:13px;line-height:17px;color:#cdcdcd;font-weight:400;transform:scaleX(0.9937);">Margin</div>
<div style="left:1362px;top:617px;width:75px;height:29px;background:#2a2a2a;border:1px solid #1c1c1c;box-sizing:border-box;"></div>
<div class="t" style="left:1422.5px;top:622.65px;font-size:13px;line-height:17px;color:#e2e2e2;font-weight:400;transform:scaleX(0.9676);">0</div>
<div style="left:1473px;top:617px;width:85px;height:29px;background:#2a2a2a;border:1px solid #1c1c1c;box-sizing:border-box;"></div>
<svg style="left:1481px;top:625px;" width="13" height="13" viewBox="0 0 13 13"><path d="M1 1V12" stroke="#d0d0d0" stroke-width="1.05"/><rect x="3.6" y="1" width="8.6" height="11" stroke="#d0d0d0" stroke-width="1.05" fill="none"/></svg>
<div style="left:1501px;top:617px;width:1px;height:29px;background:#1c1c1c;"></div>
<svg style="left:1509px;top:625px;" width="13" height="13" viewBox="0 0 13 13"><rect x="1" y="2.5" width="11" height="8.5" stroke="#d0d0d0" stroke-width="1.05" fill="none"/><path d="M6.5 0V13" stroke="#d0d0d0" stroke-width="1.05"/></svg>
<div style="left:1529px;top:617px;width:1px;height:29px;background:#1c1c1c;"></div>
<svg style="left:1537px;top:625px;" width="13" height="13" viewBox="0 0 13 13"><rect x="0.8" y="1" width="8.6" height="11" stroke="#2ba3cc" stroke-width="1.05" fill="none"/><path d="M12 1V12" stroke="#2ba3cc" stroke-width="1.05"/></svg>
<div style="left:1233px;top:671px;width:387px;height:1px;background:#000000;"></div>
<div style="left:1233px;top:672px;width:387px;height:19px;background:#2b2b2b;"></div>
<div style="left:1233px;top:673px;width:124px;height:18px;background:#57b6fb;"></div>
<div class="t" style="left:1258.2px;top:674.15px;font-size:13px;line-height:17px;color:#1f2a33;font-weight:400;transform:scaleX(1.0252);">Connections</div>
<svg style="left:1342px;top:676px;" width="12" height="12" viewBox="0 0 12 12"><path d="M0.5 0.5L11.5 11.5M11.5 0.5L0.5 11.5" stroke="#263038" stroke-width="1.2"/></svg>
<div style="left:1233px;top:691px;width:387px;height:2px;background:#57b6fb;"></div>
<div style="left:1233px;top:693px;width:387px;height:23px;background:#2a2a2a;"></div>
<div style="left:1233px;top:693px;width:387px;height:1px;background:#262220;"></div>
<div style="left:1233px;top:694px;width:82px;height:24px;background:#4c4c4c;"></div>
<div style="left:1315px;top:694px;width:107px;height:22px;background:#1e1e1e;"></div>
<div style="left:1422px;top:694px;width:87px;height:22px;background:#1e1e1e;"></div>
<div style="left:1233px;top:716px;width:387px;height:2px;background:#4f4f4f;"></div>
<div class="t" style="left:1247.5px;top:697.14px;font-size:12px;line-height:16px;color:#cdcdcd;font-weight:400;transform:scaleX(0.9443);">Connections</div>
<div class="t" style="left:1349.0px;top:697.14px;font-size:12px;line-height:16px;color:#cdcdcd;font-weight:400;transform:scaleX(0.9667);">Bindings</div>
<div class="t" style="left:1437.0px;top:697.14px;font-size:12px;line-height:16px;color:#cdcdcd;font-weight:400;transform:scaleX(0.9506);">Properties</div>
<div style="left:1233px;top:718px;width:387px;height:41px;background:#333333;"></div>
<svg style="left:1239px;top:731px;" width="14" height="14" viewBox="0 0 14 14"><path d="M7 1V13M1 7H13" stroke="#d6d6d6" stroke-width="1.6"/></svg>
<svg style="left:1267px;top:736px;" width="14" height="3" viewBox="0 0 14 3"><path d="M1 1.5H13" stroke="#d6d6d6" stroke-width="1.6"/></svg>
<div style="left:1233px;top:759px;width:387px;height:19px;background:#1f1f1f;"></div>
<div style="left:1312px;top:759px;width:1px;height:19px;background:#333;"></div>
<div style="left:1472px;top:759px;width:1px;height:19px;background:#333;"></div>
<div class="t" style="left:1238.7px;top:761.93px;font-size:11.5px;line-height:15px;color:#cfcfcf;font-weight:400;">Target</div>
<div class="t" style="left:1318.7px;top:761.93px;font-size:11.5px;line-height:15px;color:#cfcfcf;font-weight:400;transform:scaleX(0.9730);">Signal Handler</div>
<div class="t" style="left:1478.5px;top:761.93px;font-size:11.5px;line-height:15px;color:#cfcfcf;font-weight:400;transform:scaleX(0.9822);">Action</div>
<div style="left:1233px;top:778px;width:387px;height:231px;background:#2a2a2a;"></div>
<div style="left:1313px;top:778px;width:307px;height:30px;background:#29acd6;"></div>
<div class="t" style="left:1239.9px;top:786.63px;font-size:11.5px;line-height:15px;color:#595959;font-weight:400;">buttonMous...</div>
<div class="t" style="left:1319.5px;top:786.63px;font-size:11.5px;line-height:15px;color:#17242c;font-weight:400;transform:scaleX(0.9584);">onClicked</div>
<div class="t" style="left:1479.2px;top:786.63px;font-size:11.5px;line-height:15px;color:#17242c;font-weight:400;transform:scaleX(0.9601);">console.log("clicked")</div>
<div style="left:1222px;top:999px;width:269px;height:10px;background:#232323;"></div>
<div style="left:1315px;top:690px;width:40px;height:40px;background:#3dc653;"></div>
<div class="t" style="left:1327.0px;top:696.25px;font-size:22px;line-height:29px;color:#ffffff;font-weight:700;transform:scaleX(1.3061);">2</div>
<div style="left:1232px;top:999px;width:1px;height:10px;background:#000000;"></div>
<div style="left:1222px;top:999px;width:1px;height:10px;background:#2b2b2b;"></div>
<svg style="left:1603px;top:1034px;" width="17" height="17" viewBox="0 0 17 17"><path d="M0.5 17L17 0.5M4.5 17L17 4.5M8.5 17L17 8.5M12.5 17L17 12.5" stroke="#505050" stroke-width="0.9"/></svg>
</body></html>
